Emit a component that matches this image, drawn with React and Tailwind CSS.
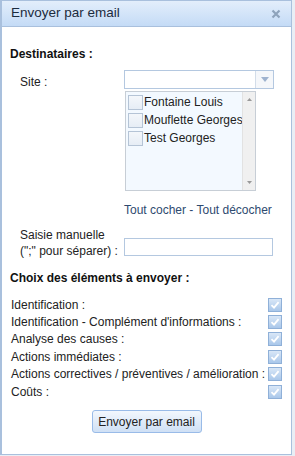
import React from "react";

const Check = ({ checked }) => (
  <span className="inline-flex w-[14px] h-[14px] border border-[#8fb0d8] bg-gradient-to-b from-[#d9e7f7] to-[#a9c7ea] items-center justify-center shrink-0">
    {checked && (
      <svg width="10" height="10" viewBox="0 0 10 10">
        <path d="M1.5 5.2 L4 7.6 L8.6 2.2" stroke="#ffffff" strokeWidth="1.8" fill="none" />
      </svg>
    )}
  </span>
);

const EmptyBox = () => (
  <span className="inline-block w-[15px] h-[15px] border border-[#b5c4d6] bg-gradient-to-b from-[#f4f7fb] to-[#e6edf5] shrink-0" />
);

export default function App() {
  const items = [
    "Identification :",
    "Identification - Complément d'informations :",
    "Analyse des causes :",
    "Actions immédiates :",
    "Actions correctives / préventives / amélioration :",
    "Coûts :",
  ];
  return (
    <div className="w-[295px] h-[456px] bg-[#e9eef5] text-[#222] text-[12px]" style={{ fontFamily: "Tahoma, 'Liberation Sans', Arial, sans-serif" }}>
      <div className="w-[292px] h-[455px] border border-[#a9c0dd] border-l-2 flex flex-col bg-white">
        <div className="h-[26px] shrink-0 bg-gradient-to-b from-[#e3eefb] to-[#c4dbf6] border-b border-[#a9c0dd] flex items-center justify-between pl-[9px] pr-[10px]">
          <span className="text-[13.5px] text-[#1c2b3d]">Envoyer par email</span>
          <svg width="10" height="10" viewBox="0 0 10 10">
            <path d="M1.5 1.5 L8.5 8.5 M8.5 1.5 L1.5 8.5" stroke="#8ea3bb" strokeWidth="2.2" />
          </svg>
        </div>
        <div className="flex flex-col pl-[8px] pr-[8px]">
          <div className="mt-[18px] font-bold text-[#111]">Destinataires :</div>
          <div className="mt-[7px] flex">
            <div className="w-[114px] pl-[10px] pt-[3px]">Site :</div>
            <div className="flex flex-col">
              <div className="w-[150px] h-[19px] border border-[#b4c8e0] bg-white flex justify-end">
                <div className="w-[18px] h-full border-l border-[#d3dde9] bg-[#f5f7fa] flex items-center justify-center">
                  <svg width="8" height="5" viewBox="0 0 8 5"><path d="M0 0 H8 L4 5 Z" fill="#9fb3cf" /></svg>
                </div>
              </div>
              <div className="mt-[2px] ml-[1px] w-[131px] h-[100px] border border-[#c7ced6] bg-[#f3f9ff] flex">
                <div className="flex-1 flex flex-col pt-[1px] pl-[2px] overflow-hidden">
                  {["Fontaine Louis", "Mouflette Georges", "Test Georges"].map((n) => (
                    <div key={n} className="flex items-center h-[18px] gap-[1px] whitespace-nowrap">
                      <EmptyBox />
                      <span>{n}</span>
                    </div>
                  ))}
                </div>
                <div className="w-[13px] shrink-0 bg-[#f0f0f0] border-l border-[#e2e2e2] flex flex-col justify-between items-center py-[6px]">
                  <svg width="5" height="3" viewBox="0 0 5 3"><path d="M0 3 H5 L2.5 0 Z" fill="#999" /></svg>
                  <svg width="5" height="3" viewBox="0 0 5 3"><path d="M0 0 H5 L2.5 3 Z" fill="#999" /></svg>
                </div>
              </div>
              <div className="mt-[10px] text-[#2e4a6f]">Tout cocher - Tout décocher</div>
            </div>
          </div>
          <div className="mt-[8px] flex items-end">
            <div className="w-[114px] pl-[10px] leading-[16px]">
              Saisie manuelle<br />(";" pour séparer) :
            </div>
            <div className="w-[149px] h-[18px] border border-[#b4c8e0] bg-white mb-[3px]" />
          </div>
          <div className="mt-[10px] font-bold text-[#111]">Choix des éléments à envoyer :</div>
          <div className="mt-[9px] flex flex-col pl-[1px] pr-[1px]">
            {items.map((t) => (
              <div key={t} className="flex items-center justify-between h-[17.4px] whitespace-nowrap">
                <span>{t}</span>
                <Check checked />
              </div>
            ))}
          </div>
          <div className="mt-[10px] flex justify-center">
            <button className="w-[110px] h-[23px] rounded-[3px] border border-[#99bbe8] bg-gradient-to-b from-[#f2f7fd] to-[#cfe0f5] text-[#222] text-[12px]">
              Envoyer par email
            </button>
          </div>
        </div>
      </div>
    </div>
  );
}
